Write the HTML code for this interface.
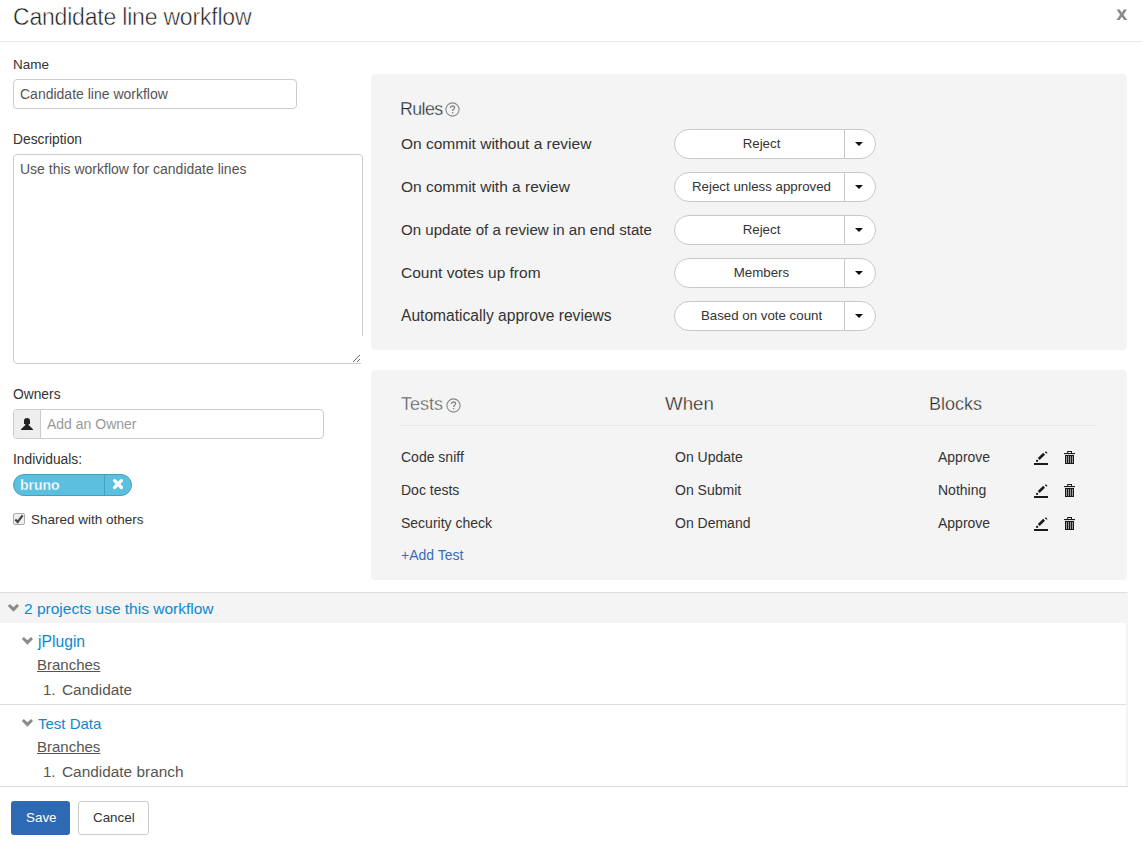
<!DOCTYPE html>
<html><head><meta charset="utf-8">
<style>
*{box-sizing:border-box;margin:0;padding:0}
html,body{width:1143px;height:843px;overflow:hidden;background:#fff}
body{position:relative;font-family:"Liberation Sans",sans-serif;color:#333}
.a{position:absolute;white-space:nowrap;line-height:1}
.t{position:absolute;white-space:nowrap;line-height:0;margin-top:-0.3465em}
.box{position:absolute}
.sel{left:674px;width:202px;height:30px;background:#fff;border:1px solid #c8c8c8;border-radius:15px}
</style></head><body>

<!-- header -->
<div class="t" style="left:13px;top:25px;font-size:23px;color:#1a1a1a;letter-spacing:-0.2px;-webkit-text-stroke:0.5px #fff">Candidate line workflow</div>
<svg class="box" style="left:1116px;top:9px" width="12" height="12" viewBox="0 0 12 12"><path d="M0.6 0.6H3.8L5.8 3.7L7.8 0.6H11L7.5 5.7L11.2 11H8L5.8 7.7L3.6 11H0.4L4.1 5.7Z" fill="#8a8a8a"/></svg>
<div class="box" style="left:0;top:41px;width:1142px;height:1px;background:#e9e9e9"></div>

<!-- left column -->
<div class="t" style="left:13px;top:70px;font-size:13.5px">Name</div>
<div class="box" style="left:13px;top:79px;width:284px;height:30px;border:1px solid #ccc;border-radius:4px"></div>
<div class="t" style="left:20px;top:99px;font-size:14px;color:#555">Candidate line workflow</div>

<div class="t" style="left:13px;top:145px;font-size:13.8px">Description</div>
<div class="box" style="left:13px;top:154px;width:350px;height:210px;border:1px solid #ccc;border-radius:4px 4px 0 4px"></div>
<div class="box" style="left:361px;top:336px;width:3px;height:29px;background:#fff"></div>
<div class="t" style="left:20px;top:174px;font-size:14px;color:#555">Use this workflow for candidate lines</div>
<svg class="box" style="left:352px;top:354px" width="9" height="9" viewBox="0 0 9 9"><path d="M1 8L8 1M5 8L8 5" stroke="#555" stroke-width="0.9"/></svg>

<div class="t" style="left:13px;top:400px;font-size:13.8px">Owners</div>
<div class="box" style="left:13px;top:409px;width:311px;height:30px;border:1px solid #ccc;border-radius:4px;overflow:hidden">
  <div class="box" style="left:0;top:0;width:27px;height:28px;background:#eee;border-right:1px solid #ccc"></div>
</div>
<div class="t" style="left:47px;top:429px;font-size:14px;color:#999">Add an Owner</div>
<svg class="box" style="left:20px;top:417px" width="14" height="14" viewBox="0 0 14 14"><path d="M4 3.8C4 1.8 5.2 1 7 1S10 1.8 10 3.8V6.9H4Z" fill="#222"/><rect x="5.2" y="6" width="3.6" height="3" fill="#222"/><path d="M1 13L1 12.2L4.8 8.6H9.2L13 12.2V13Z" fill="#222"/></svg>

<div class="t" style="left:13px;top:465px;font-size:13.8px">Individuals:</div>
<div class="box" style="left:13px;top:474px;width:119px;height:22px;background:#5bc0de;border-radius:11px;border:1px solid #42a0c2"></div>
<div class="box" style="left:104px;top:475px;width:1px;height:20px;background:#42a0c2"></div>
<div class="t" style="left:20px;top:490px;font-size:14px;font-weight:bold;color:#fff;-webkit-text-stroke:0.3px #5bc0de">bruno</div>
<svg class="box" style="left:112px;top:478px" width="12" height="12" viewBox="0 0 12 12"><path d="M2.6 2.7L9.4 9.5M9.4 2.7L2.6 9.5" stroke="#fff" stroke-width="3.3" stroke-linecap="round"/></svg>

<div class="box" style="left:13px;top:513px;width:12px;height:12px;border:1px solid #aaa;border-radius:2px;background:#eee"></div>
<svg class="box" style="left:13px;top:513px" width="12" height="12" viewBox="0 0 12 12"><path d="M2.3 6.6L4.6 9L9.6 2.4" fill="none" stroke="#444" stroke-width="2.2"/></svg>
<div class="t" style="left:31px;top:525px;font-size:13.5px">Shared with others</div>

<!-- rules panel -->
<div class="box" style="left:371px;top:74px;width:756px;height:276px;background:#f4f4f4;border-radius:4px"></div>
<div class="t" style="left:400px;top:115px;font-size:17.8px;color:#222;letter-spacing:-0.6px;-webkit-text-stroke:0.35px #f4f4f4">Rules</div>
<svg class="box" style="left:444.5px;top:101.5px" width="15" height="15" viewBox="0 0 15 15"><circle cx="7.5" cy="7.5" r="6.6" fill="none" stroke="#888" stroke-width="1.1"/><path d="M5.4 6.1C5.4 4.6 6.4 4 7.5 4S9.6 4.7 9.6 5.8C9.6 7.3 7.6 7.3 7.6 9" fill="none" stroke="#888" stroke-width="1.3"/><rect x="6.9" y="10" width="1.4" height="1.4" fill="#888"/></svg>

<div class="t" style="left:401px;top:149px;font-size:15.5px">On commit without a review</div>
<div class="t" style="left:401px;top:192px;font-size:15.5px">On commit with a review</div>
<div class="t" style="left:401px;top:235px;font-size:15.1px">On update of a review in an end state</div>
<div class="t" style="left:401px;top:278px;font-size:15.5px">Count votes up from</div>
<div class="t" style="left:401px;top:321px;font-size:15.6px">Automatically approve reviews</div>

<div class="box sel" style="top:129px"></div><div class="box" style="left:844px;top:129px;width:1px;height:30px;background:#c8c8c8"></div><div class="t" style="left:674px;width:170px;text-align:center;top:149px;font-size:13.3px;padding-left:5px">Reject</div><svg class="box" style="left:855px;top:142px" width="8" height="4" viewBox="0 0 8 4"><path d="M0 0H8L4 4Z" fill="#111"/></svg>
<div class="box sel" style="top:172px"></div><div class="box" style="left:844px;top:172px;width:1px;height:30px;background:#c8c8c8"></div><div class="t" style="left:674px;width:170px;text-align:center;top:192px;font-size:13.3px;padding-left:5px">Reject unless approved</div><svg class="box" style="left:855px;top:185px" width="8" height="4" viewBox="0 0 8 4"><path d="M0 0H8L4 4Z" fill="#111"/></svg>
<div class="box sel" style="top:215px"></div><div class="box" style="left:844px;top:215px;width:1px;height:30px;background:#c8c8c8"></div><div class="t" style="left:674px;width:170px;text-align:center;top:235px;font-size:13.3px;padding-left:5px">Reject</div><svg class="box" style="left:855px;top:228px" width="8" height="4" viewBox="0 0 8 4"><path d="M0 0H8L4 4Z" fill="#111"/></svg>
<div class="box sel" style="top:258px"></div><div class="box" style="left:844px;top:258px;width:1px;height:30px;background:#c8c8c8"></div><div class="t" style="left:674px;width:170px;text-align:center;top:278px;font-size:13.3px;padding-left:5px">Members</div><svg class="box" style="left:855px;top:271px" width="8" height="4" viewBox="0 0 8 4"><path d="M0 0H8L4 4Z" fill="#111"/></svg>
<div class="box sel" style="top:301px"></div><div class="box" style="left:844px;top:301px;width:1px;height:30px;background:#c8c8c8"></div><div class="t" style="left:674px;width:170px;text-align:center;top:321px;font-size:13.3px;padding-left:5px">Based on vote count</div><svg class="box" style="left:855px;top:314px" width="8" height="4" viewBox="0 0 8 4"><path d="M0 0H8L4 4Z" fill="#111"/></svg>

<!-- tests panel -->
<div class="box" style="left:371px;top:370px;width:756px;height:210px;background:#f4f4f4;border-radius:4px"></div>
<div class="t" style="left:401px;top:410px;font-size:18px;color:#555;-webkit-text-stroke:0.35px #f4f4f4">Tests</div>
<svg class="box" style="left:446px;top:397.5px" width="15" height="15" viewBox="0 0 15 15"><circle cx="7.5" cy="7.5" r="6.6" fill="none" stroke="#888" stroke-width="1.1"/><path d="M5.4 6.1C5.4 4.6 6.4 4 7.5 4S9.6 4.7 9.6 5.8C9.6 7.3 7.6 7.3 7.6 9" fill="none" stroke="#888" stroke-width="1.3"/><rect x="6.9" y="10" width="1.4" height="1.4" fill="#888"/></svg>
<div class="t" style="left:665px;top:410px;font-size:18.7px;color:#222;-webkit-text-stroke:0.35px #f4f4f4">When</div>
<div class="t" style="left:929px;top:410px;font-size:18px;color:#222;-webkit-text-stroke:0.35px #f4f4f4">Blocks</div>
<div class="box" style="left:401px;top:425px;width:696px;height:1px;background:#e6e6e6"></div>

<div class="t" style="left:401px;top:462px;font-size:14px">Code sniff</div>
<div class="t" style="left:675px;top:462px;font-size:14px">On Update</div>
<div class="t" style="left:938px;top:462px;font-size:14px">Approve</div>
<div class="t" style="left:401px;top:495px;font-size:14px">Doc tests</div>
<div class="t" style="left:675px;top:495px;font-size:14px">On Submit</div>
<div class="t" style="left:938px;top:495px;font-size:14px">Nothing</div>
<div class="t" style="left:401px;top:528px;font-size:14px">Security check</div>
<div class="t" style="left:675px;top:528px;font-size:14px">On Demand</div>
<div class="t" style="left:938px;top:528px;font-size:14px">Approve</div>
<div class="t" style="left:401px;top:560px;font-size:14px;color:#3a6cb5">+Add Test</div>

<svg class="box" style="left:1034px;top:451px" width="15" height="15" viewBox="0 0 15 15"><rect x="0" y="12" width="14" height="2" fill="#1a1a1a"/><circle cx="3.1" cy="9.9" r="1.15" fill="#1a1a1a"/><path d="M4.7 8L10.1 2.8" stroke="#1a1a1a" stroke-width="2.6"/><path d="M11.2 0.9Q12.6 1.2 12.8 2.3" stroke="#1a1a1a" stroke-width="1.5" fill="none"/></svg>
<svg class="box" style="left:1064px;top:451px" width="11" height="13" viewBox="0 0 11 13"><path d="M3.2 0H8V2H7V1H4.2V2H3.2Z" fill="#1a1a1a"/><rect x="0" y="2" width="11" height="1.1" fill="#1a1a1a"/><rect x="1" y="4" width="9" height="9" fill="#1a1a1a"/><rect x="2" y="5" width="1" height="7" fill="#9a9a9a"/><rect x="4" y="5" width="1" height="7" fill="#9a9a9a"/><rect x="6" y="5" width="1" height="7" fill="#9a9a9a"/><rect x="8" y="5" width="1" height="7" fill="#9a9a9a"/></svg>
<svg class="box" style="left:1034px;top:484px" width="15" height="15" viewBox="0 0 15 15"><rect x="0" y="12" width="14" height="2" fill="#1a1a1a"/><circle cx="3.1" cy="9.9" r="1.15" fill="#1a1a1a"/><path d="M4.7 8L10.1 2.8" stroke="#1a1a1a" stroke-width="2.6"/><path d="M11.2 0.9Q12.6 1.2 12.8 2.3" stroke="#1a1a1a" stroke-width="1.5" fill="none"/></svg>
<svg class="box" style="left:1064px;top:484px" width="11" height="13" viewBox="0 0 11 13"><path d="M3.2 0H8V2H7V1H4.2V2H3.2Z" fill="#1a1a1a"/><rect x="0" y="2" width="11" height="1.1" fill="#1a1a1a"/><rect x="1" y="4" width="9" height="9" fill="#1a1a1a"/><rect x="2" y="5" width="1" height="7" fill="#9a9a9a"/><rect x="4" y="5" width="1" height="7" fill="#9a9a9a"/><rect x="6" y="5" width="1" height="7" fill="#9a9a9a"/><rect x="8" y="5" width="1" height="7" fill="#9a9a9a"/></svg>
<svg class="box" style="left:1034px;top:517px" width="15" height="15" viewBox="0 0 15 15"><rect x="0" y="12" width="14" height="2" fill="#1a1a1a"/><circle cx="3.1" cy="9.9" r="1.15" fill="#1a1a1a"/><path d="M4.7 8L10.1 2.8" stroke="#1a1a1a" stroke-width="2.6"/><path d="M11.2 0.9Q12.6 1.2 12.8 2.3" stroke="#1a1a1a" stroke-width="1.5" fill="none"/></svg>
<svg class="box" style="left:1064px;top:517px" width="11" height="13" viewBox="0 0 11 13"><path d="M3.2 0H8V2H7V1H4.2V2H3.2Z" fill="#1a1a1a"/><rect x="0" y="2" width="11" height="1.1" fill="#1a1a1a"/><rect x="1" y="4" width="9" height="9" fill="#1a1a1a"/><rect x="2" y="5" width="1" height="7" fill="#9a9a9a"/><rect x="4" y="5" width="1" height="7" fill="#9a9a9a"/><rect x="6" y="5" width="1" height="7" fill="#9a9a9a"/><rect x="8" y="5" width="1" height="7" fill="#9a9a9a"/></svg>

<!-- projects -->
<div class="box" style="left:0;top:592px;width:1128px;height:195px;border-top:1px solid #ddd;border-right:2px solid #f4f4f4"></div>
<div class="box" style="left:0;top:593px;width:1128px;height:30px;background:#f4f4f4"></div>
<div class="t" style="left:24px;top:614px;font-size:15.5px;color:#1088d0">2 projects use this workflow</div>
<div class="t" style="left:38px;top:647px;font-size:15.7px;color:#1088d0">jPlugin</div>
<div class="t" style="left:37px;top:670px;font-size:15px;color:#555;text-decoration:underline">Branches</div>
<div class="t" style="left:43px;top:695px;font-size:15px;color:#555">1.</div><div class="t" style="left:62px;top:695px;font-size:15.4px;color:#555">Candidate</div>
<div class="box" style="left:0;top:704px;width:1126px;height:1px;background:#ddd"></div>
<div class="t" style="left:38px;top:729px;font-size:15px;color:#1088d0">Test Data</div>
<div class="t" style="left:37px;top:752px;font-size:15px;color:#555;text-decoration:underline">Branches</div>
<div class="t" style="left:43px;top:777px;font-size:15px;color:#555">1.</div><div class="t" style="left:62px;top:777px;font-size:15.4px;color:#555">Candidate branch</div>
<div class="box" style="left:0;top:786px;width:1128px;height:1px;background:#ddd"></div>

<svg class="box" style="left:7px;top:603px" width="13" height="10" viewBox="0 0 13 10"><path d="M0.9 3L2.8 0.9L6.45 4.2L10.1 0.9L12 3L6.45 8.8Z" fill="#8a8a8a"/></svg>
<svg class="box" style="left:21px;top:636px" width="13" height="10" viewBox="0 0 13 10"><path d="M0.9 3L2.8 0.9L6.45 4.2L10.1 0.9L12 3L6.45 8.8Z" fill="#8a8a8a"/></svg>
<svg class="box" style="left:21px;top:718px" width="13" height="10" viewBox="0 0 13 10"><path d="M0.9 3L2.8 0.9L6.45 4.2L10.1 0.9L12 3L6.45 8.8Z" fill="#8a8a8a"/></svg>

<!-- buttons -->
<div class="box" style="left:11px;top:801px;width:59px;height:34px;background:#2e6ab3;border-radius:3px"></div>
<div class="t" style="left:26px;top:823px;font-size:13.4px;color:#fff">Save</div>
<div class="box" style="left:78px;top:801px;width:71px;height:34px;border:1px solid #ccc;border-radius:3px"></div>
<div class="t" style="left:93px;top:823px;font-size:13.4px;color:#333">Cancel</div>

</body></html>
